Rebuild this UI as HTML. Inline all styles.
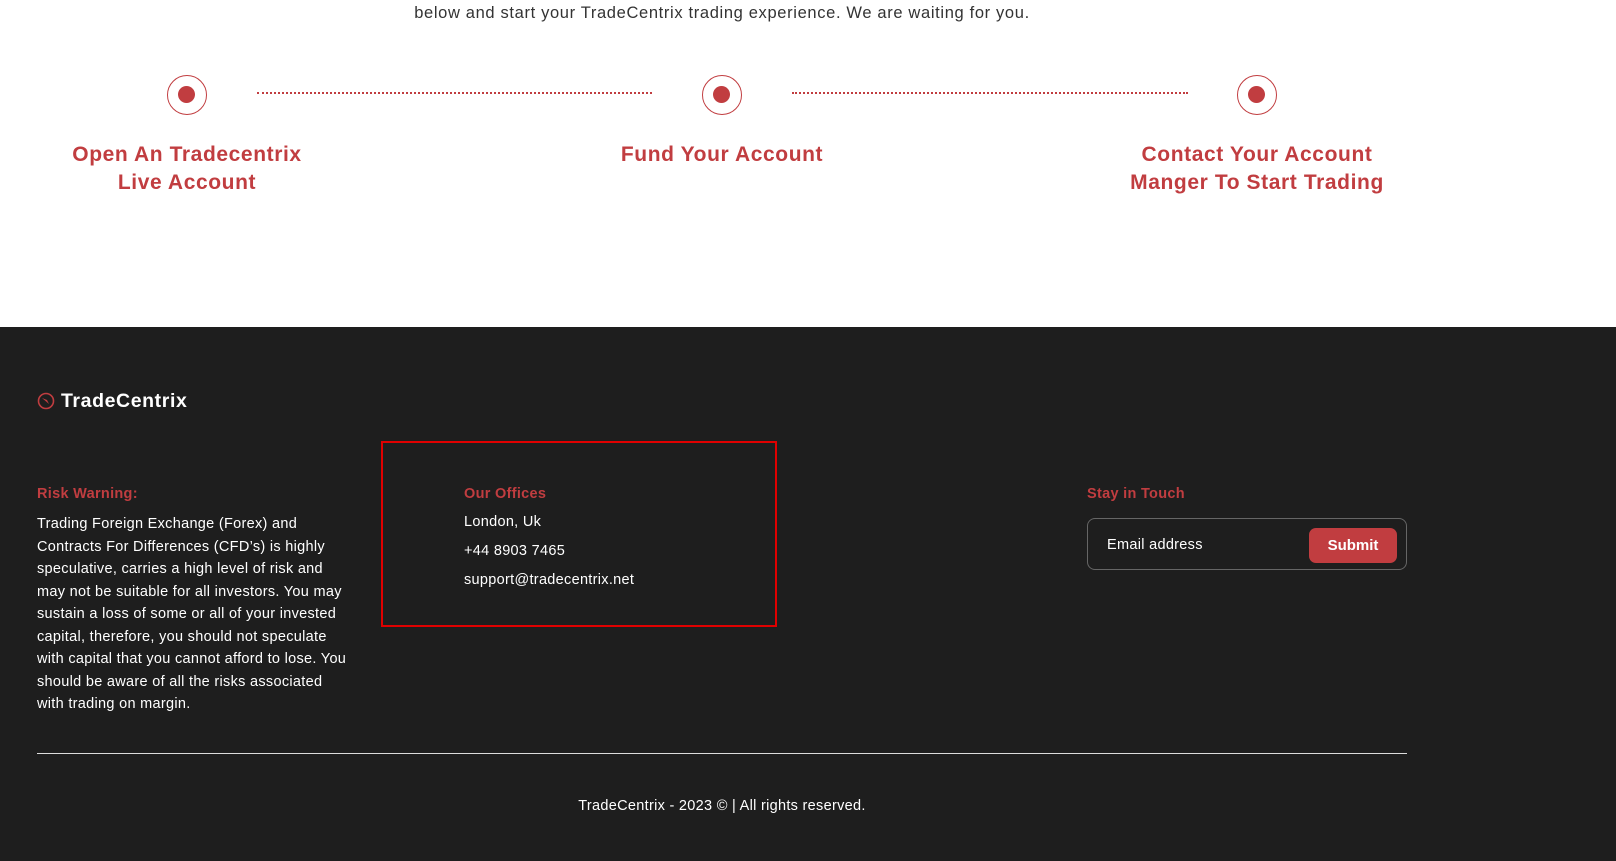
<!DOCTYPE html>
<html><head><meta charset="utf-8"><style>
*{margin:0;padding:0;box-sizing:border-box}
body{width:1616px;height:861px;overflow:hidden;background:#fff;font-family:"Liberation Sans",sans-serif;position:relative}
.a{position:absolute;white-space:nowrap}
.circ{position:absolute;width:40px;height:40px;border:1.5px solid #c13d40;border-radius:50%;top:75px}
.circ::after{content:"";position:absolute;left:10px;top:10px;width:17px;height:17px;border-radius:50%;background:#c13d40}
.dots{position:absolute;top:92px;height:0;border-top:2px dotted #c13d40}
.h{position:absolute;color:#c13d40;font-weight:bold;font-size:21px;line-height:28px;text-align:center;width:400px;letter-spacing:0.6px}
.foot{position:absolute;left:0;top:327px;width:1616px;height:534px;background:#1e1e1e}
.w{color:#fff;font-size:14.5px;letter-spacing:0.3px}
.r{color:#c13d40;font-size:14.5px;font-weight:bold;letter-spacing:0.3px}
</style></head><body>
<div class="a" style="left:0;width:1444px;text-align:center;top:4px;font-size:16.5px;color:#333;letter-spacing:0.65px">below and start your TradeCentrix trading experience. We are waiting for you.</div>
<div class="circ" style="left:167px"></div>
<div class="circ" style="left:702px"></div>
<div class="circ" style="left:1237px"></div>
<div class="dots" style="left:257px;width:395px"></div>
<div class="dots" style="left:792px;width:396px"></div>
<div class="h" style="left:-13px;top:141px">Open An Tradecentrix<br>Live Account</div>
<div class="h" style="left:522px;top:141px">Fund Your Account</div>
<div class="h" style="left:1057px;top:141px">Contact Your Account<br>Manger To Start Trading</div>
<div class="foot">
<svg class="a" style="left:37px;top:65px" width="18" height="18" viewBox="0 0 18 18"><circle cx="9" cy="9" r="7.5" fill="none" stroke="#c13d40" stroke-width="1.6"/><path d="M5 6 L12 12 L10 8 Z" fill="#c13d40"/></svg>
<div class="a" style="left:61px;top:63px;color:#fff;font-weight:bold;font-size:19.5px;letter-spacing:0.6px">TradeCentrix</div>
<div class="a r" style="left:37px;top:159px">Risk Warning:</div>
<div class="a w" style="left:37px;top:186px;line-height:22.5px;white-space:normal;width:316px">Trading Foreign Exchange (Forex) and Contracts For Differences (CFD’s) is highly speculative, carries a high level of risk and may not be suitable for all investors. You may sustain a loss of some or all of your invested capital, therefore, you should not speculate with capital that you cannot afford to lose. You should be aware of all the risks associated with trading on margin.</div>
<div class="a" style="left:381px;top:114px;width:396px;height:186px;border:2px solid #e00000"></div>
<div class="a r" style="left:464px;top:159px">Our Offices</div>
<div class="a w" style="left:464px;top:187px">London, Uk</div>
<div class="a w" style="left:464px;top:216px">+44 8903 7465</div>
<div class="a w" style="left:464px;top:245px">support@tradecentrix.net</div>
<div class="a r" style="left:1087px;top:159px">Stay in Touch</div>
<div class="a" style="left:1087px;top:191px;width:320px;height:52px;border:1px solid #666;border-radius:8px"></div>
<div class="a w" style="left:1107px;top:210px">Email address</div>
<div class="a" style="left:1309px;top:201px;width:88px;height:35px;background:#c13d40;border-radius:7px;color:#fff;font-size:15px;font-weight:bold;text-align:center;line-height:35px">Submit</div>
<div class="a" style="left:37px;top:426px;width:1370px;height:1px;background:#ddd"></div>
<div class="a w" style="left:0;width:1444px;text-align:center;top:471px">TradeCentrix - 2023 © | All rights reserved.</div>
</div>
</body></html>
